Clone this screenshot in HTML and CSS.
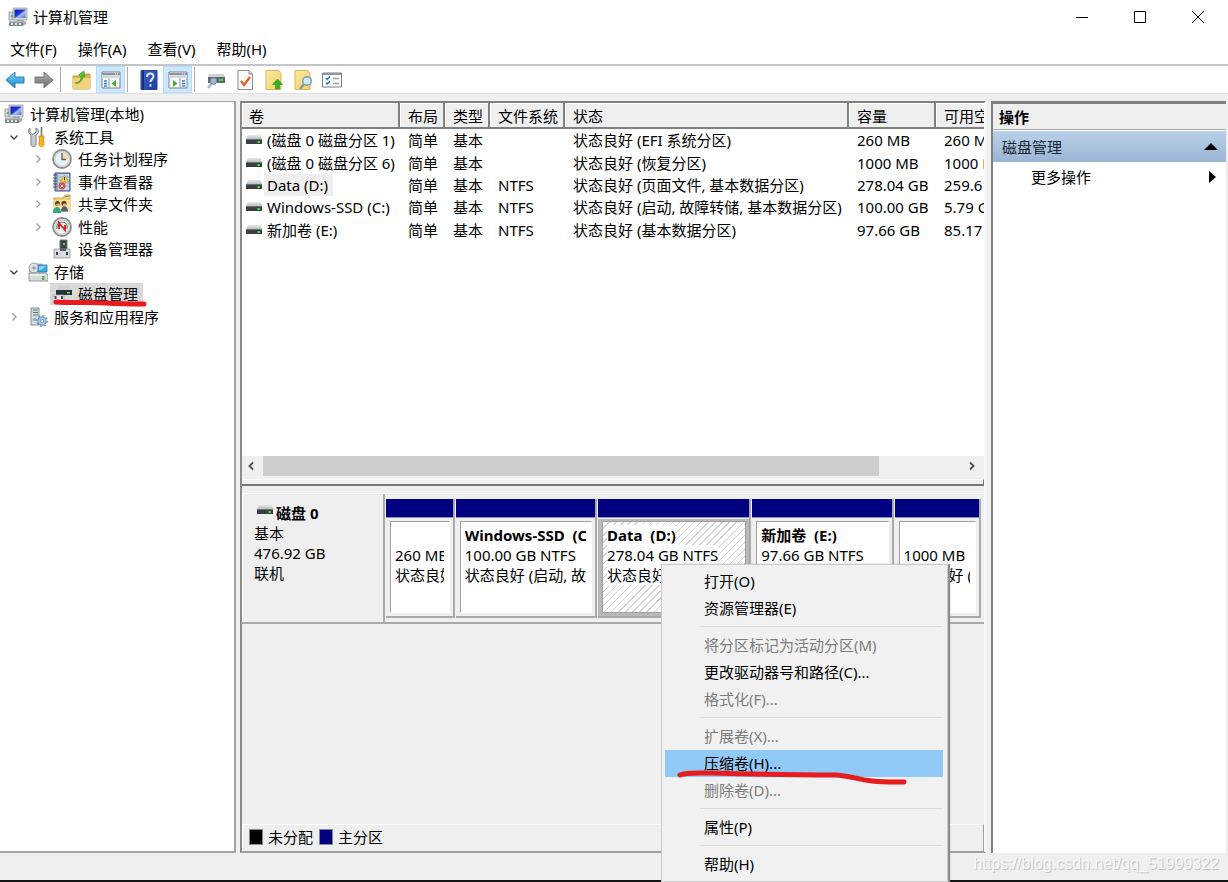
FILE: index.html
```html
<!DOCTYPE html>
<html lang="zh-CN">
<head>
<meta charset="utf-8">
<title>计算机管理</title>
<link rel="stylesheet" href="styles.css">
</head>
<body>
<svg class="defs" aria-hidden="true">
  <defs>
    <linearGradient id="g-blue" x1="0" y1="0" x2="0" y2="1"><stop offset="0" stop-color="#7fd0f7"/><stop offset="1" stop-color="#1583cf"/></linearGradient>
    <linearGradient id="g-grey" x1="0" y1="0" x2="0" y2="1"><stop offset="0" stop-color="#b0b0b0"/><stop offset="1" stop-color="#6c6c6c"/></linearGradient>
    <linearGradient id="g-screen" x1="0" y1="0" x2="1" y2="1"><stop offset="0" stop-color="#0b1fb8"/><stop offset=".45" stop-color="#1c33cf"/><stop offset=".6" stop-color="#a9c0f5"/><stop offset="1" stop-color="#4c6fe0"/></linearGradient>
    <linearGradient id="g-help" x1="0" y1="0" x2="1" y2="1"><stop offset="0" stop-color="#4468cf"/><stop offset="1" stop-color="#1e3b9c"/></linearGradient>
    <linearGradient id="g-yellow" x1="0" y1="0" x2="1" y2="1"><stop offset="0" stop-color="#fdeaa0"/><stop offset="1" stop-color="#f1cf6a"/></linearGradient>
    <linearGradient id="g-drive" x1="0" y1="0" x2="0" y2="1"><stop offset="0" stop-color="#e6e9eb"/><stop offset="1" stop-color="#b9bec3"/></linearGradient>
    <symbol id="i-computer" viewBox="0 0 20 20">
      <path d="M1 5h4v8H1z" fill="#cfd3d6" stroke="#8f979c" stroke-width=".8"/><path d="M3 8h2v2H3z" fill="#42bd4a"/>
      <path d="M5 1h14v12H5z" fill="#d6d8d2" stroke="#9a9d99" stroke-width=".8"/><path d="M6.500 2.500h11v8.500h-11z" fill="url(#g-screen)"/>
      <path d="M9 13h6l2 2H8z" fill="#9ba0a0"/><path d="M1 14h14v5H1z" fill="#7d868b"/><path d="M1 14h14v1.500H1z" fill="#b5bcc0"/>
      <path d="M3 16h2v2H3zm4 0h2v2H7zm4 0h2v2h-2z" fill="#dfe4e6"/><path d="M15 15l3-1v3l-3 2z" fill="#a9b0b3"/>
    </symbol>
    <symbol id="i-tools" viewBox="0 0 20 20">
      <path d="M2 1v4l2 2h2l2-2V1c3 1 3.500 5 0 7v10c0 2-5 2-5 0V8C0 6 0 2 2 1z" fill="#c9cdcf" stroke="#777e82" stroke-width=".9"/>
      <path d="M13.500 0v9" stroke="#6e767a" stroke-width="1.600"/><path d="M11 9h5v3l-1 1 1 1v4c0 2-5 2-5 0v-4l1-1-1-1z" fill="#f5b323" stroke="#cc8610" stroke-width=".7"/>
    </symbol>
    <symbol id="i-clock" viewBox="0 0 20 20">
      <circle cx="10" cy="10" r="9" fill="#e8f1f8" stroke="#8d8d8d" stroke-width="1.800"/><path d="M10 10V3a7 7 0 0 1 7 7z" fill="#f6ddaa"/>
      <circle cx="10" cy="10" r="7.400" fill="none" stroke="#cfd2d3" stroke-width="1.200"/><path d="M10 4v6.500h4" fill="none" stroke="#555e68" stroke-width="1.300"/>
    </symbol>
    <symbol id="i-events" viewBox="0 0 20 20">
      <path d="M3 1h15v18H3z" fill="#8ba5cb" stroke="#42577e"/><path d="M6 2h11v16H6z" fill="#c7d6ec"/><path d="M6 5h11M6 8h11M6 11h11M6 14h11" stroke="#8ca3c6" stroke-width=".8"/>
      <path d="M1 3h4M1 6h4M1 9h4M1 12h4M1 15h4" stroke="#4b5563" stroke-width="1.200"/><path d="M12.500 3l4 7h-8z" fill="#ffd52e" stroke="#bd9100" stroke-width=".6"/><path d="M12.500 5v3M12.500 8.700v.6" stroke="#333"/>
      <circle cx="10" cy="14" r="3.400" fill="#e14545"/><path d="M8.700 12.700l2.600 2.600m0-2.600l-2.600 2.600" stroke="#fff"/>
    </symbol>
    <symbol id="i-shared" viewBox="0 0 20 20">
      <path d="M2 4h9l2-3h5v16H2z" fill="#f2ce6d" stroke="#c49a3a" stroke-width=".8"/><path d="M13 2.500h4" stroke="#4da3d8"/><path d="M2 6h16v11H2z" fill="#f9df94"/>
      <circle cx="5.500" cy="9.500" r="2.500" fill="#5b3c20"/><circle cx="12" cy="9.500" r="2.500" fill="#4a2e1a"/><path d="M4.500 9.500h3v2.500h-3zm6.500 0h3v2.500h-3z" fill="#e8b48b"/>
      <path d="M1 19c0-8 8-8 8 0z" fill="#31a98a"/><path d="M9 17.500c0-7 7-7 7 0z" fill="#4a5f78"/>
    </symbol>
    <symbol id="i-perf" viewBox="0 0 20 20">
      <circle cx="10" cy="10" r="9" fill="#f4f6f6" stroke="#8d8d8d" stroke-width="1.800"/><circle cx="10" cy="10" r="7.300" fill="none" stroke="#c9cccd" stroke-width="1.200"/>
      <path d="M5 12c-1-4 1-7 5-7s6 3 5 7" fill="none" stroke="#578868" stroke-width="1.200"/><path d="M7 12V6l6 7V8" fill="none" stroke="#e02020" stroke-width="1.900"/>
    </symbol>
    <symbol id="i-device" viewBox="0 0 20 20">
      <path d="M8 1h7v11H8z" fill="#3c4143" stroke="#777"/><path d="M11 4h2v2h-2z" fill="#50e04a"/><path d="M2 10h16v9H2z" fill="#d8dbde" stroke="#94999d" stroke-width=".8"/><path d="M8 9h6v3H8z" fill="#585e61"/><path d="M4 13h2v3H4zm10 0h2v3h-2z" fill="#353b3e"/>
    </symbol>
    <symbol id="i-storage" viewBox="0 0 20 20">
      <path d="M2 6l3-4h9l4 8H1z" fill="#c6cbcf" stroke="#92989d" stroke-width=".7"/><circle cx="6" cy="6" r="5" fill="#d9dfe0" stroke="#8e969a" stroke-width=".8"/><circle cx="6" cy="6" r="1.600" fill="#8d969a"/>
      <path d="M10 3h9v7h-9z" fill="#3baade" stroke="#1b6f9f" stroke-width=".7"/><path d="M11 4h7l-5 4h-2z" fill="#86d4f2"/>
      <path d="M1 11h17l2 2v6H1z" fill="#d7dadd" stroke="#7d8388" stroke-width=".8"/><path d="M2 13h15" stroke="#fff"/><path d="M14 14h2.500v4H14z" fill="#54b447"/>
    </symbol>
    <symbol id="i-diskmgr" viewBox="0 0 20 20">
      <path d="M6 2h11l2 4H4z" fill="#cdd1d4"/><path d="M4 6h16v5H4z" fill="#2d3234"/><path d="M15 8h3v1.500h-3z" fill="#4ff060"/><path d="M1 11h11v8H1z" fill="#eef0f1" stroke="#a0a5a9" stroke-width=".7"/><path d="M2.500 12h2v3h-2zm6.500 0h2v3H9z" fill="#444b4e"/>
    </symbol>
    <symbol id="i-services" viewBox="0 0 20 20">
      <path d="M3 1h8v17H3z" fill="#d2dbe0" stroke="#83919a"/><path d="M5 3h5M5 5.500h5M5 8h5" stroke="#64747e"/><path d="M5 11h3v3H5z" fill="#9eb0bb"/>
      <circle cx="14" cy="14" r="4.200" fill="#a9cbe9" stroke="#6590b5"/><circle cx="14" cy="14" r="5.200" fill="none" stroke="#6f9ac1" stroke-width="1.500" stroke-dasharray="2 2"/><circle cx="14" cy="14" r="1.600" fill="#fff" stroke="#5d83a4" stroke-width=".7"/>
    </symbol>
    <symbol id="i-drive" viewBox="0 0 18 12"><path d="M3 1h13l1 4H1z" fill="url(#g-drive)"/><path d="M1 5h16v5H1z" fill="#3a3f41"/><path d="M1 5h16v1H1z" fill="#6e7375"/><path d="M12.500 7h2.500v2h-2.500z" fill="#38e03f"/></symbol>
    <symbol id="i-back" viewBox="0 0 20 20"><path d="M1 10l9-8v5h9v6h-9v5z" fill="url(#g-blue)" stroke="#3182b8"/></symbol>
    <symbol id="i-forward" viewBox="0 0 20 20"><path d="M19 10l-9-8v5H1v6h9v5z" fill="url(#g-grey)" stroke="#777"/></symbol>
    <symbol id="i-folderup" viewBox="0 0 20 20"><path d="M1 6h8l2-2h7v15H1z" fill="#dcb456" stroke="#b58c33" stroke-width=".8"/><path d="M1 8h17v11H1z" fill="#f2d27c"/><path d="M3 13c5-1 6-3 6-6L6.500 5 12 1l1 6-2-1c0 4-3 8-8 7z" fill="#53c431" stroke="#368c1c" stroke-width=".6"/></symbol>
    <symbol id="i-panelleft" viewBox="0 0 20 20"><path d="M1 2h18v16H1z" fill="#f6f8fa" stroke="#7c858d"/><path d="M1 3h18v2H1z" fill="#8d969f"/><path d="M14 4h1m1 0h1" stroke="#fff"/><path d="M1 5h18v3H1z" fill="#d4dadf"/><path d="M8 8v10" stroke="#8d969f"/><path d="M3 11h3M3 13.500h3M3 16h3" stroke="#377ec2" stroke-width="1.400"/><path d="M15 10v7l-4.500-3.500z" fill="#43af32"/></symbol>
    <symbol id="i-panelright" viewBox="0 0 20 20"><path d="M1 2h18v16H1z" fill="#f6f8fa" stroke="#7c858d"/><path d="M1 3h18v2H1z" fill="#8d969f"/><path d="M14 4h1m1 0h1" stroke="#fff"/><path d="M1 5h18v3H1z" fill="#d4dadf"/><path d="M12 8v10" stroke="#8d969f"/><path d="M14 11h3M14 13.500h3M14 16h3" stroke="#377ec2" stroke-width="1.400"/><path d="M5 10v7l4.500-3.500z" fill="#43af32"/></symbol>
    <symbol id="i-help" viewBox="0 0 20 20"><path d="M2 .500h16v19H2z" fill="url(#g-help)" stroke="#23439c"/><path d="M3 1h2v18H3z" fill="#17327d"/><path d="M8 7c0-5 7-4.500 6.500-.500C14.300 9 11.500 9 11.500 12M11.500 14.200v2.300" fill="none" stroke="#e4eaf8" stroke-width="2"/></symbol>
    <symbol id="i-connect" viewBox="0 0 20 20"><path d="M3 4h15l1 3H2z" fill="#cfd3d5"/><path d="M2 7h17v6H2z" fill="#636a6e"/><path d="M13 9h4v2h-4z" fill="#42d14a"/><path d="M6 13l-4 5" stroke="#9eb9cf" stroke-width="2.500"/><circle cx="7.500" cy="11" r="3.200" fill="#9dbccf" stroke="#738b9b"/></symbol>
    <symbol id="i-check" viewBox="0 0 20 20"><path d="M3 .500h11l3.500 3.500v15.500H3z" fill="#fafafa" stroke="#8d8d8d"/><path d="M14 .500V4h3.500" fill="#ddd" stroke="#8d8d8d"/><path d="M6 11l3 4 6-8" fill="none" stroke="#ef5a28" stroke-width="2.300"/></symbol>
    <symbol id="i-pageup" viewBox="0 0 20 20"><path d="M2 .500h13l2 3v16H2z" fill="url(#g-yellow)" stroke="#d9b65a"/><path d="M13.500 9l5 5.500h-3V19h-4v-4.500h-3z" fill="#2fb321" stroke="#1d8f14" stroke-width=".5"/></symbol>
    <symbol id="i-pagefind" viewBox="0 0 20 20"><path d="M2 .500h13l2 3v16H2z" fill="url(#g-yellow)" stroke="#d9b65a"/><path d="M11 14l-4 5" stroke="#8b98a0" stroke-width="2.200"/><circle cx="14" cy="11" r="4.300" fill="#cfe8f6" stroke="#7a9bb0" stroke-width="1.400"/></symbol>
    <symbol id="i-list" viewBox="0 0 20 20"><path d="M.500 3h19v14H.500z" fill="#f8fafb" stroke="#7b8288"/><path d="M1 3h18v2H1z" fill="#8e979e"/><path d="M4 8l1.200 1.500L8 6.500M4 12.500L5.200 14 8 11" fill="none" stroke="#2378c8" stroke-width="1.300"/><path d="M11 8.500h6M11 13.500h6" stroke="#a0a6ab" stroke-width="1.300"/></symbol>
    <symbol id="i-open" viewBox="0 0 10 10"><path d="M1.500 3.500L5 7l3.500-3.500" fill="none" stroke="#404040" stroke-width="1.400"/></symbol>
    <symbol id="i-closed" viewBox="0 0 10 10"><path d="M3.500 1.500L7 5 3.500 8.500" fill="none" stroke="#a0a0a0" stroke-width="1.300"/></symbol>
  </defs>
</svg>

<header class="titlebar">
  <svg class="icon"><use href="#i-computer"/></svg>
  <h1 class="title">计算机管理</h1>
  <div class="window-controls">
    <button aria-label="最小化"><svg viewBox="0 0 12 12"><path d="M0 6.500h12"/></svg></button>
    <button aria-label="最大化"><svg viewBox="0 0 12 12"><path d="M.500.500h11v11H.500z"/></svg></button>
    <button aria-label="关闭"><svg viewBox="0 0 12 12"><path d="M0 0l12 12M12 0L0 12"/></svg></button>
  </div>
</header>
<nav class="menubar">
  <button>文件(F)</button><button>操作(A)</button><button>查看(V)</button><button>帮助(H)</button>
</nav>
<div class="toolbar" role="toolbar" aria-label="工具栏">
  <button aria-label="后退"><svg class="icon"><use href="#i-back"/></svg></button>
  <button aria-label="前进"><svg class="icon"><use href="#i-forward"/></svg></button>
  <span class="divider"></span>
  <button aria-label="向上"><svg class="icon"><use href="#i-folderup"/></svg></button>
  <button class="active" aria-label="控制台树"><svg class="icon"><use href="#i-panelleft"/></svg></button>
  <span class="divider"></span>
  <button aria-label="帮助"><svg class="icon"><use href="#i-help"/></svg></button>
  <button class="active" aria-label="操作窗格"><svg class="icon"><use href="#i-panelright"/></svg></button>
  <span class="divider"></span>
  <button aria-label="连接"><svg class="icon"><use href="#i-connect"/></svg></button>
  <button aria-label="属性"><svg class="icon"><use href="#i-check"/></svg></button>
  <button aria-label="上移"><svg class="icon"><use href="#i-pageup"/></svg></button>
  <button aria-label="查找"><svg class="icon"><use href="#i-pagefind"/></svg></button>
  <button aria-label="选项"><svg class="icon"><use href="#i-list"/></svg></button>
</div>

<main class="workspace">
  <nav class="tree-pane" aria-label="控制台树">
    <ul class="tree">
      <li class="root"><span class="node"><svg class="icon"><use href="#i-computer"/></svg>计算机管理(本地)</span></li>
      <li><button class="toggle" aria-label="折叠"><svg><use href="#i-open"/></svg></button><span class="node"><svg class="icon"><use href="#i-tools"/></svg>系统工具</span></li>
      <li class="child"><button class="toggle" aria-label="展开"><svg><use href="#i-closed"/></svg></button><span class="node"><svg class="icon"><use href="#i-clock"/></svg>任务计划程序</span></li>
      <li class="child"><button class="toggle" aria-label="展开"><svg><use href="#i-closed"/></svg></button><span class="node"><svg class="icon"><use href="#i-events"/></svg>事件查看器</span></li>
      <li class="child"><button class="toggle" aria-label="展开"><svg><use href="#i-closed"/></svg></button><span class="node"><svg class="icon"><use href="#i-shared"/></svg>共享文件夹</span></li>
      <li class="child"><button class="toggle" aria-label="展开"><svg><use href="#i-closed"/></svg></button><span class="node"><svg class="icon"><use href="#i-perf"/></svg>性能</span></li>
      <li class="child"><span class="toggle"></span><span class="node"><svg class="icon"><use href="#i-device"/></svg>设备管理器</span></li>
      <li><button class="toggle" aria-label="折叠"><svg><use href="#i-open"/></svg></button><span class="node"><svg class="icon"><use href="#i-storage"/></svg>存储</span></li>
      <li class="child"><span class="toggle"></span><span class="node selected"><svg class="icon"><use href="#i-diskmgr"/></svg>磁盘管理<svg class="mark mark-tree" viewBox="0 0 94 8"><path d="M3 3C20 4 36 3 52 4s26 1 39 1"/></svg></span></li>
      <li><button class="toggle" aria-label="展开"><svg><use href="#i-closed"/></svg></button><span class="node"><svg class="icon"><use href="#i-services"/></svg>服务和应用程序</span></li>
    </ul>
  </nav>

  <section class="center-pane">
    <div class="list-pane">
      <div class="table-wrap">
        <table class="volumes">
          <colgroup><col class="c-name"><col class="c-short"><col class="c-short"><col class="c-fs"><col class="c-status"><col class="c-size"><col class="c-free"></colgroup>
          <thead><tr><th>卷</th><th>布局</th><th>类型</th><th>文件系统</th><th>状态</th><th>容量</th><th>可用空间</th></tr></thead>
          <tbody>
            <tr><td><span class="vol"><svg class="drive"><use href="#i-drive"/></svg><span>(磁盘 0 磁盘分区 1)</span></span></td><td>简单</td><td>基本</td><td></td><td>状态良好 (EFI 系统分区)</td><td>260 MB</td><td>260 MB</td></tr>
            <tr><td><span class="vol"><svg class="drive"><use href="#i-drive"/></svg><span>(磁盘 0 磁盘分区 6)</span></span></td><td>简单</td><td>基本</td><td></td><td>状态良好 (恢复分区)</td><td>1000 MB</td><td>1000 MB</td></tr>
            <tr><td><span class="vol"><svg class="drive"><use href="#i-drive"/></svg><span class="focused">Data (D:)</span></span></td><td>简单</td><td>基本</td><td>NTFS</td><td>状态良好 (页面文件, 基本数据分区)</td><td>278.04 GB</td><td>259.61 GB</td></tr>
            <tr><td><span class="vol"><svg class="drive"><use href="#i-drive"/></svg><span>Windows-SSD (C:)</span></span></td><td>简单</td><td>基本</td><td>NTFS</td><td>状态良好 (启动, 故障转储, 基本数据分区)</td><td>100.00 GB</td><td>5.79 GB</td></tr>
            <tr><td><span class="vol"><svg class="drive"><use href="#i-drive"/></svg><span>新加卷 (E:)</span></span></td><td>简单</td><td>基本</td><td>NTFS</td><td>状态良好 (基本数据分区)</td><td>97.66 GB</td><td>85.17 GB</td></tr>
          </tbody>
        </table>
      </div>
      <div class="scrollbar">
        <button aria-label="向左滚动"><svg viewBox="0 0 10 10"><path d="M7 1.500L3.500 5 7 8.500"/></svg></button>
        <div class="track"><div class="thumb"></div></div>
        <button aria-label="向右滚动"><svg viewBox="0 0 10 10"><path d="M3 1.500L6.500 5 3 8.500"/></svg></button>
      </div>
      <div class="splitter"></div>
    </div>

    <div class="disk-pane">
      <div class="disk">
        <div class="disk-info">
          <strong class="disk-name"><svg class="drive"><use href="#i-drive"/></svg>磁盘 0</strong>
          <span>基本</span><span>476.92 GB</span><span>联机</span>
        </div>
        <div class="partitions">
          <div class="partition p-efi"><div class="bar"></div><div class="frame"><div class="info"><b></b><span>260 MB</span><span>状态良好</span></div></div></div>
          <div class="partition p-c"><div class="bar"></div><div class="frame"><div class="info"><b>Windows-SSD&nbsp; (C:)</b><span>100.00 GB NTFS</span><span>状态良好 (启动, 故障转储)</span></div></div></div>
          <div class="partition p-d chosen"><div class="bar"></div><div class="frame"><div class="info"><b>Data&nbsp; (D:)</b><span>278.04 GB NTFS</span><span>状态良好</span></div></div></div>
          <div class="partition p-e"><div class="bar"></div><div class="frame"><div class="info"><b>新加卷&nbsp; (E:)</b><span>97.66 GB NTFS</span><span>状态良好</span></div></div></div>
          <div class="partition p-rec"><div class="bar"></div><div class="frame"><div class="info"><b></b><span>1000 MB</span><span>状态良好 (</span></div></div></div>
        </div>
      </div>
      <div class="legend"><i class="swatch black"></i><span>未分配</span><i class="swatch navy"></i><span>主分区</span></div>
    </div>
  </section>

  <aside class="actions-pane">
    <h2>操作</h2>
    <button class="group">磁盘管理<svg viewBox="0 0 14 7"><path d="M0 7l7-7 7 7z"/></svg></button>
    <button class="more">更多操作<svg viewBox="0 0 7 12"><path d="M0 0l7 6-7 6z"/></svg></button>
  </aside>
</main>
<footer class="statusbar"><span class="watermark">https://blog.csdn.net/qq_51999322</span></footer>

<div class="context-menu" role="menu">
  <button role="menuitem">打开(O)</button>
  <button role="menuitem">资源管理器(E)</button>
  <hr>
  <button role="menuitem" disabled>将分区标记为活动分区(M)</button>
  <button role="menuitem">更改驱动器号和路径(C)...</button>
  <button role="menuitem" disabled>格式化(F)...</button>
  <hr>
  <button role="menuitem" disabled>扩展卷(X)...</button>
  <button role="menuitem" class="hover">压缩卷(H)...</button>
  <button role="menuitem" disabled>删除卷(D)...</button>
  <hr>
  <button role="menuitem">属性(P)</button>
  <hr>
  <button role="menuitem">帮助(H)</button>
  <svg class="mark mark-menu" viewBox="0 0 230 18"><path d="M3 7C10 4 18 5 34 5C70 6 105 7 158 7C180 8 182 15 227 14"/></svg>
</div>
</body>
</html>
```

FILE: styles.css
```css
* { box-sizing: border-box; }

body {
  margin: 0;
  min-height: 100vh;
  display: flex;
  flex-direction: column;
  position: relative;
  background: #efefef;
  color: #000;
  font: 15px/20px "Noto Sans", "Noto Sans CJK SC", sans-serif;
  white-space: nowrap;
}

button {
  margin: 0;
  padding: 0;
  border: 0;
  background: none;
  color: inherit;
  font: inherit;
  text-align: left;
}

svg { display: block; flex: none; }
.defs { position: absolute; width: 0; height: 0; }
.icon { width: 20px; height: 20px; }
.drive { width: 18px; height: 12px; }

/* Title bar and menus */
.titlebar {
  display: flex;
  align-items: center;
  height: 33px;
  padding-left: 8px;
  gap: 5px;
  background: #fff;
}
.title { margin: 0; font-size: 15px; font-weight: 400; }
.window-controls { display: flex; margin-left: auto; margin-right: 1px; }
.window-controls button {
  width: 58px;
  height: 34px;
  display: flex;
  align-items: center;
  justify-content: center;
}
.window-controls svg { width: 12px; height: 12px; fill: none; stroke: #000; }

.menubar {
  display: flex;
  gap: 21px;
  height: 33px;
  padding: 0 10px;
  align-items: center;
  background: #fff;
  border-bottom: 2px solid #c4c5c9;
}

.toolbar {
  display: flex;
  align-items: center;
  height: 28px;
  background: #fff;
  border-bottom: 1px solid #e2e2e2;
}
.toolbar button {
  width: 29px;
  height: 27px;
  display: flex;
  align-items: center;
  justify-content: center;
}
.toolbar .active { background: #cce8ff; box-shadow: inset 0 0 0 1px #b5dcfa; }
.toolbar .divider { width: 2px; height: 25px; margin: 0 5px 0 2px; border-left: 1px solid #aaa; }

/* Three-column workspace */
.workspace {
  flex: 1;
  display: grid;
  grid-template-columns: 236px minmax(0, 746px) minmax(235px, 1fr);
  column-gap: 4px;
  padding: 7px 2px 0 0;
}

.tree-pane { background: #fff; border: 2px solid #a0a3aa; border-left: 0; border-top-width: 1px; padding-top: 1px; }
.tree {
  list-style: none;
  margin: 0;
  padding: 0;
  height: 225px;
  display: flex;
  flex-direction: column;
}
.tree li { flex: 1; display: flex; align-items: center; padding-left: 2px; }
.tree .child { padding-left: 26px; }
.toggle { width: 24px; height: 20px; display: flex; align-items: center; justify-content: center; }
.toggle svg { width: 10px; height: 10px; }
.node { position: relative; display: flex; align-items: center; gap: 6px; height: 22px; padding: 0 5px 0 2px; }
.selected { background: #d9d9d9; }

.mark { position: absolute; fill: none; stroke: #e81b1f; stroke-linecap: round; pointer-events: none; }
.mark-tree { left: 3px; bottom: -2px; width: 94px; height: 8px; stroke-width: 5px; }
.mark-menu { left: 15px; bottom: 95px; width: 230px; height: 18px; stroke-width: 5px; }

.center-pane {
  min-width: 0;
  display: flex;
  flex-direction: column;
  border-left: 2px solid #8b8b8b;
  border-top: 2px solid #808080;
  border-right: 2px solid #f8f8f8;
  border-bottom: 2px solid #a0a0a0;
}
.list-pane { flex: 387 1 0; display: flex; flex-direction: column; background: #fff; }
.table-wrap { flex: 1; overflow: hidden; }
.volumes { table-layout: fixed; width: 794px; height: 138px; border-collapse: separate; border-spacing: 0; }
.c-name { width: 158px; }
.c-short { width: 45px; }
.c-fs { width: 75px; }
.c-status { width: 284px; }
.c-size { width: 87px; }
.c-free { width: 100px; }
.volumes th {
  height: 26px;
  padding: 1px 0 0 8px;
  text-align: left;
  font-weight: 400;
  background: #efefef;
  border-right: 2px solid #808080;
  border-bottom: 2px solid #808080;
  box-shadow: inset 1px 1px #fff;
}
.volumes th:first-child { padding-left: 7px; }
.volumes td { padding: 0 0 0 8px; }
.volumes td:first-child { padding-left: 3px; }
.vol { display: flex; align-items: center; gap: 1px; }
.vol > span { padding: 0 3px; line-height: 22px; }
.vol .focused { background: #efefef; padding-right: 5px; }

.scrollbar { display: flex; height: 23px; padding-bottom: 3px; background: #efefef; }
.scrollbar button { width: 21px; padding-right: 3px; display: flex; align-items: center; justify-content: center; }
.scrollbar svg { width: 10px; height: 10px; fill: none; stroke: #505050; stroke-width: 1.8; }
.track { flex: 1; }
.thumb { width: 88%; height: 100%; background: #cdcdcd; }
.splitter { height: 7px; background: #efefef; border-top: 1px solid #fff; border-right: 1px solid #777; border-bottom: 2px solid #777; }

/* Graphical disk view */
.disk-pane { flex: 361 1 0; display: flex; flex-direction: column; padding-top: 7px; background: #efefef; }
.disk { display: flex; height: 131px; border-top: 1px solid #fff; border-bottom: 2px solid #aaa; }
.disk-info {
  width: 143px;
  display: flex;
  flex-direction: column;
  padding: 9px 0 0 11px;
  border-left: 1px solid #fff;
  border-right: 2px solid #aaa;
}
.disk-name { display: flex; gap: 2px; padding-left: 2px; }
.disk-name .drive { margin-top: 1px; }
.partitions { flex: 1; min-width: 0; display: flex; gap: 1px; padding: 5px 3px 4px 1px; }
.partition { min-width: 0; display: flex; flex-direction: column; border-right: 2px solid #aaa; border-bottom: 2px solid #aaa; }
.p-efi { flex: 68 1 0; }
.p-c { flex: 142 1 0; }
.p-d { flex: 154 1 0; }
.p-e { flex: 142 1 0; }
.p-rec { flex: 86 1 0; }
.bar { height: 19px; background: navy; border-bottom: 1px solid #9090b0; }
.frame { flex: 1; min-width: 0; display: flex; margin-top: 1px; padding: 2px 3px 3px 4px; }
.info {
  flex: 1;
  min-width: 0;
  display: flex;
  flex-direction: column;
  align-items: flex-start;
  padding: 3px 5px 0 4px;
  background: #fff;
  border: 1px solid #a0a0a0;
  border-right: 1px solid #fff;
  border-bottom-color: #fff;
}
.info > * { height: 20px; max-width: 100%; overflow: hidden; line-height: 20px; }
.chosen .frame { background: #b8b8b8; }
.chosen .info { background: repeating-linear-gradient(135deg, #fff 0 4px, #d2d2d2 4px 5px); border-color: #a0a0a0; }
.chosen .info > * { background: #fff; }

.legend {
  display: flex;
  align-items: center;
  height: 27px;
  margin-top: auto;
  padding: 0 0 2px 6px;
  border-top: 1px solid #fff;
  border-left: 1px solid #fff;
  border-right: 1px solid #a0a0a0;
}
.swatch { width: 14px; height: 16px; border: 1px solid #888; }
.legend span { padding: 0 6px 0 5px; }
.black { background: #000; }
.navy { background: navy; }

/* Actions column */
.actions-pane {
  display: flex;
  flex-direction: column;
  margin-left: 1px;
  background: #fff;
  border-left: 2px solid #808080;
  border-top: 3px solid #808080;
}
.actions-pane h2 {
  margin: 0;
  height: 26px;
  padding-left: 6px;
  font-size: 15px;
  line-height: 26px;
  background: #efefef;
  border-bottom: 1px solid #aaa;
}
.actions-pane button { display: flex; align-items: center; justify-content: space-between; height: 31px; }
.actions-pane .group { margin-top: 1px; padding: 0 8px 0 9px; color: #1b2733; background: linear-gradient(#b9d1ea, #9ab4d4); }
.group svg { width: 14px; height: 7px; fill: #000; }
.actions-pane .more { height: 30px; padding: 0 10px 0 38px; }
.more svg { width: 7px; height: 12px; }

.statusbar {
  display: flex;
  align-items: center;
  justify-content: flex-end;
  height: 29px;
  padding: 0 9px 6px 0;
  border-bottom: 2px solid #151515;
}
.watermark { font: 16px/18px "Liberation Sans", sans-serif; color: #f8f8f8; text-shadow: 1px 1px 1px #bbb; }

/* Context menu over the disk view */
.context-menu {
  position: absolute;
  left: 661px;
  top: 564px;
  width: 287px;
  display: flex;
  flex-direction: column;
  padding: 3px 4px 3px 3px;
  background: #f1f1f1;
  border: 1px solid #ccc;
  box-shadow: 2px 0 1px #8c8c8c;
}
.context-menu button { height: 27px; padding: 0 0 1px 39px; }
.context-menu button:disabled { color: #7d7d7d; }
.context-menu .hover { background: #91c9f7; }
.context-menu hr { width: calc(100% - 35px); height: 1px; margin: 4px 0 5px 35px; border: 0; background: #dcdcdc; }
```
